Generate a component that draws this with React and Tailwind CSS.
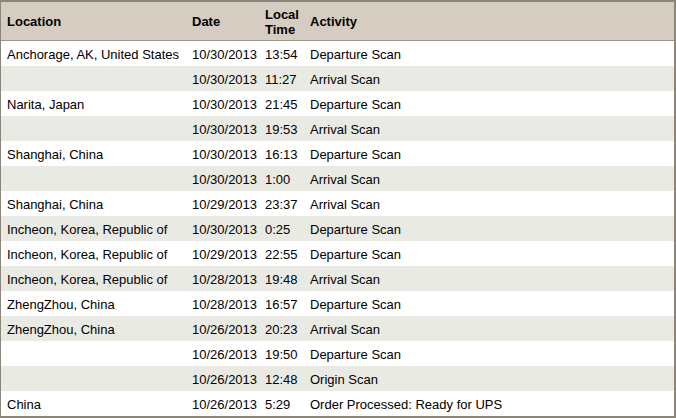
const rows = [
  ["Anchorage, AK, United States", "10/30/2013", "13:54", "Departure Scan"],
  ["", "10/30/2013", "11:27", "Arrival Scan"],
  ["Narita, Japan", "10/30/2013", "21:45", "Departure Scan"],
  ["", "10/30/2013", "19:53", "Arrival Scan"],
  ["Shanghai, China", "10/30/2013", "16:13", "Departure Scan"],
  ["", "10/30/2013", "1:00", "Arrival Scan"],
  ["Shanghai, China", "10/29/2013", "23:37", "Arrival Scan"],
  ["Incheon, Korea, Republic of", "10/30/2013", "0:25", "Departure Scan"],
  ["Incheon, Korea, Republic of", "10/29/2013", "22:55", "Departure Scan"],
  ["Incheon, Korea, Republic of", "10/28/2013", "19:48", "Arrival Scan"],
  ["ZhengZhou, China", "10/28/2013", "16:57", "Departure Scan"],
  ["ZhengZhou, China", "10/26/2013", "20:23", "Arrival Scan"],
  ["", "10/26/2013", "19:50", "Departure Scan"],
  ["", "10/26/2013", "12:48", "Origin Scan"],
  ["China", "10/26/2013", "5:29", "Order Processed: Ready for UPS"],
];

export default function App() {
  return (
    <div
      className="w-[676px] h-[418px] overflow-hidden bg-white text-black border-[#8c8579] border-t-2 border-l border-r-2 border-b-2 text-[13px]"
      style={{ fontFamily: '"Liberation Sans", Arial, sans-serif' }}
    >
      <div className="grid grid-cols-[191px_73px_45px_1fr] h-[39px] pt-[1px] bg-[#d5cdc1] items-center font-bold leading-[15px] border-b border-[#9a9488]">
        <div className="pl-[6px]">Location</div>
        <div>Date</div>
        <div>
          Local
          <br />
          Time
        </div>
        <div>Activity</div>
      </div>
      {rows.map((r, i) => (
        <div
          key={i}
          className={
            "grid grid-cols-[191px_73px_45px_1fr] h-[25px] pt-[2px] items-center leading-[15px] " +
            (i % 2 === 1 ? "bg-[#eaeae4]" : "bg-white")
          }
        >
          <div className="pl-[6px] whitespace-nowrap">{r[0]}</div>
          <div>{r[1]}</div>
          <div>{r[2]}</div>
          <div className="whitespace-nowrap">{r[3]}</div>
        </div>
      ))}
    </div>
  );
}
